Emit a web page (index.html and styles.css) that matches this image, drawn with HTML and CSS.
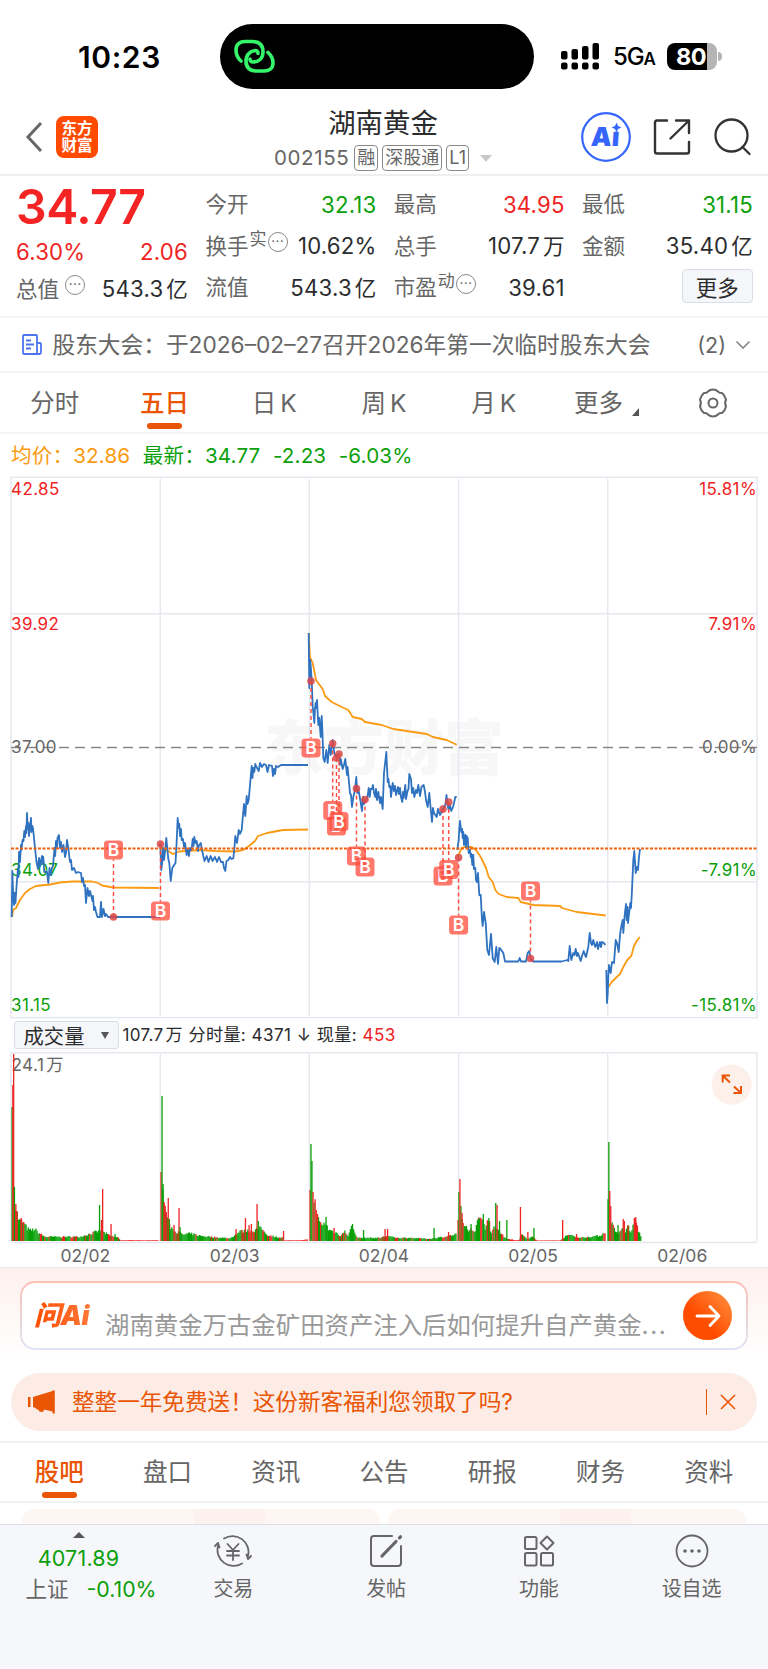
FILE: index.html
```html
<!DOCTYPE html>
<html lang="zh-CN">
<head>
  <meta charset="UTF-8" />
  <meta name="viewport" content="width=device-width, initial-scale=1" />
  <title>湖南黄金 002155</title>
  <link rel="stylesheet" href="styles.css">
</head>
<body>

  <!-- Phone status bar -->
  <div class="status-bar">
    <div class="clock">10:23</div>
    <div class="island">
      <svg width="42" height="48" viewBox="0 0 42 48" fill="none" stroke="#35f56a" stroke-width="3.6" stroke-linecap="round">
        <path d="M7 29C3.500 26 2 22 2 18C2 12 6 9.500 11 9.500H18C25 9.500 29 13 29 20C29 26 25 30 19 30C17 30 16 29 16 27"/>
        <path d="M34 20.500C37.500 23.500 39 27.500 39 31C39 36.500 35 39 30 39H23C16 39 12 35.500 12 29C12 23 16 19 21 18.500C23 18.500 24 19.500 24 21.500"/>
      </svg>
    </div>
    <div class="status-right">
      <svg width="39" height="27" viewBox="0 0 39 27">
        <rect x="0" y="8" width="6.500" height="8.500" rx="2"/><rect x="10.500" y="6" width="6.500" height="10.500" rx="2"/>
        <rect x="21" y="3" width="6.500" height="13.500" rx="2"/><rect x="31.500" y="0" width="6.500" height="16.500" rx="2"/>
        <rect x="0" y="19.500" width="6.500" height="7" rx="2"/><rect x="10.500" y="19.500" width="6.500" height="7" rx="2"/>
        <rect x="21" y="19.500" width="6.500" height="7" rx="2"/><rect x="31.500" y="19.500" width="6.500" height="7" rx="2"/>
      </svg>
      <span class="network">5G<small>A</small></span>
      <span class="battery">80</span>
    </div>
  </div>

  <!-- Header -->
  <header class="header">
    <div class="header-left">
      <svg width="18" height="32" viewBox="0 0 18 32" fill="none" stroke="#666" stroke-width="3"><path d="M16 2L3 16L16 30"/></svg>
      <div class="app-logo">东方<br>财富</div>
    </div>
    <div class="header-title">
      <h1>湖南黄金</h1>
      <div class="stock-code">
        <span class="code">002155</span>
        <span class="tag">融</span><span class="tag">深股通</span><span class="tag">L1</span>
        <i class="caret"></i>
      </div>
    </div>
    <div class="header-right">
      <svg width="50" height="50" viewBox="0 0 50 50">
        <circle cx="25" cy="25" r="23.800" fill="none" stroke="#3565fb" stroke-width="2.200"/>
        <text class="ai-text" x="10" y="34" transform="skewX(-4) translate(2 0)">Aı</text>
        <path d="M35.500 10.500L37 14L40.500 15.500L37 17L35.500 20.500L34 17L30.500 15.500L34 14Z" fill="#3565fb"/>
      </svg>
      <svg width="38" height="38" viewBox="0 0 38 38" fill="none" stroke="#333" stroke-width="2.400" stroke-linecap="round" stroke-linejoin="round">
        <path d="M14 2.500H4Q2 2.500 2 4.500V33.500Q2 35.500 4 35.500H34Q36 35.500 36 33.500V24M23 2.500H36V15M36 2.500L17.500 20.500"/>
      </svg>
      <svg width="38" height="38" viewBox="0 0 38 38" fill="none" stroke="#333" stroke-width="2.300" stroke-linecap="round">
        <circle cx="17.500" cy="17.500" r="16"/><path d="M28.500 29L35.500 36"/>
      </svg>
    </div>
  </header>

  <!-- Quote -->
  <section class="quote">
    <div class="quote-main">
      <div class="price">34.77</div>
      <div class="pair"><span class="red">6.30%</span><span class="red">2.06</span></div>
      <div class="pair total"><label>总值<i class="info">⋯</i></label><span>543.3<em>亿</em></span></div>
    </div>
    <div class="quote-grid">
      <div class="pair"><label>今开</label><span class="green">32.13</span></div>
      <div class="pair"><label>最高</label><span class="red">34.95</span></div>
      <div class="pair"><label>最低</label><span class="green">31.15</span></div>
      <div class="pair"><label>换手<sup>实</sup><i class="info">⋯</i></label><span>10.62%</span></div>
      <div class="pair"><label>总手</label><span>107.7<em>万</em></span></div>
      <div class="pair"><label>金额</label><span>35.40<em>亿</em></span></div>
      <div class="pair"><label>流值</label><span>543.3<em>亿</em></span></div>
      <div class="pair"><label>市盈<sup>动</sup><i class="info">⋯</i></label><span>39.61</span></div>
      <div class="pair end"><button class="btn-more">更多</button></div>
    </div>
  </section>

  <!-- Notice -->
  <section class="notice">
    <svg width="20" height="22" viewBox="0 0 20 22" fill="none" stroke="#4d74ee" stroke-width="1.800">
      <path d="M1 2Q1 1 2 1H14Q15 1 15 2V20H2Q1 20 1 19ZM15 9H18Q19 9 19 10V18.500Q19 20 17.500 20H14M4 6.500H9M4 10.500H12M4 14.500H9"/>
    </svg>
    <p>股东大会：于2026–02–27召开2026年第一次临时股东大会</p>
    <span class="count">(2)</span>
    <svg width="16" height="10" viewBox="0 0 16 10" fill="none" stroke="#888" stroke-width="1.600"><path d="M1.500 1.500L8 8L14.500 1.500"/></svg>
  </section>

  <!-- Period tabs -->
  <nav class="tabs period-tabs">
    <a>分时</a>
    <a class="active">五日</a>
    <a>日<em>K</em></a>
    <a>周<em>K</em></a>
    <a>月<em>K</em></a>
    <a class="more">更多<i class="corner"></i></a>
    <a>
      <svg width="30" height="30" viewBox="0 0 30 30" fill="none" stroke="#666" stroke-width="2" stroke-linejoin="round">
        <path d="M10 3.500Q12 1.500 15 1.500Q18 1.500 20 3.500Q21 5.300 24 5Q27 7.500 28 11.500Q26.300 15 28 18.500Q27 22.500 24 25Q21 24.700 20 26.500Q18 28.500 15 28.500Q12 28.500 10 26.500Q9 24.700 6 25Q3 22.500 2 18.500Q3.700 15 2 11.500Q3 7.500 6 5Q9 5.300 10 3.500Z"/>
        <circle cx="15" cy="15" r="4.500"/>
      </svg>
    </a>
  </nav>

  <!-- Five day chart -->
  <section class="chart">
    <div class="legend">
      <span class="orange">均价：32.86</span>
      <span class="green">最新：34.77</span>
      <span class="green">-2.23</span>
      <span class="green">-6.03%</span>
    </div>

    <svg class="price-chart" width="768" height="543" viewBox="0 476 768 543">
      <text class="watermark" x="264" y="770">东方财富</text>
      <g class="grid">
        <path d="M160.300 479V1016M309.300 479V1016M458.600 479V1016M607.700 479V1016M11 613.700H757M11 881.700H757"/>
        <rect x="11" y="477.300" width="746" height="540.300"/>
      </g>
      <path class="base-line" d="M11 747.500H757"/>
      <g class="axis">
        <text class="up" x="11" y="495.400">42.85</text>
        <text class="up" x="11" y="629.800">39.92</text>
        <text x="11" y="753">37.00</text>
        <text class="down" x="11" y="876.300">34.07</text>
        <text class="down" x="11" y="1011.300">31.15</text>
        <text class="up end" x="757" y="495.400">15.81%</text>
        <text class="up end" x="757" y="629.800">7.91%</text>
        <text class="end" x="757" y="753">0.00%</text>
        <text class="down end" x="757" y="876.300">-7.91%</text>
        <text class="down end" x="757" y="1011.300">-15.81%</text>
      </g>

      <g class="avg">
        <polyline points="12,917 13,910 16,908 20,900 25,893 30,889 36,886 50,884.5 60,882.5 72,881.5 92,881.5 98,883 102,885.5 113,887.5 159,888"/>
        <polyline points="160,846 165,850 168,851 173,854 179,851.5 200,850 215,851 235,851.5 243,850 249,846 255,841 258,836 267,833 283,830 308,829.5"/>
        <polyline points="308.7,633 310,657 312.7,663 316,680 322.7,689 325,696 331.7,702 341.7,707 348.3,710 352.7,717 361.7,719 365,722 381.7,725 393.3,729 426.7,734 433,737 446.7,740 456.7,744.7"/>
        <polyline points="457.3,858 461.7,848 465,847 471.7,847 476,850 480.7,857 486,868 488.7,877 492.7,882 495.3,890 498.7,894 506.7,897 518.3,898 520.7,902 533.3,905 560,906 562,908 576.7,912 605.7,915.5"/>
        <polyline points="608.3,987 611.7,982 616.7,977 620,974 623.3,967 627.3,960 631.3,956 634,946 636.7,941 639.7,937"/>
      </g>
      <g class="line">
        <polyline points="11.7,917 12.3,871 13,890 14,905 14.600,893 15.5,903 16.300,890 17,880 18,868 18.500,877 19,852 20,862 21,845 21.500,850 22.5,840 23.5,841 24.300,831 25,837 26,826 26.400,833 27,813 27.7,829 28.400,823 29,836 30,827 31,818 31.500,832 32.300,826 33,828 34,838 35,848 36.5,862 38,869 39,858 40,866 42,856 42.7,864 43.300,857 44.300,872 45.5,872 47,872 48.3,883 49.500,868 50.500,875 52,868 53,866 54.5,848 55.200,856 56,841 57,848 57.500,838 59,835 60,848 61,842 62,852 63.5,845 65,857 66,853 67,840 68.5,850 70,862 71,860 72,870 74,868 76,873 78,872 81,873 82,882 83,878 84,886 85,885 86,903 87.5,888 89,896 90,891 92.5,901 93,896 94,910 95,907 96,912 97.5,917 100,917 101,902 102,917 103.5,909 105,916 106,914 108,917 160,917"/>
        <polyline points="160.3,843 161.3,870 162.300,862 163,848 164,860 165,852 166.3,838 168.3,859 169.300,863 170.7,881 172.3,868 173.500,866 175.5,863 176.500,845 177.7,818 178.700,828 179.300,824 180,836 181,829 181.7,840 183,839 184,847 185,843 186.7,855 188,849 189,856 190,848 191.500,850 192.7,839 193.500,846 194.3,837 195.500,843 196.7,841 198,851 199,845 200.7,843 202,850 203.3,856 204.500,861 206.7,856 208.500,862 210.7,856 212.500,861 215,857 217,862 219,857 221,862 223,862 224,868 225.3,871 226.500,861 228.3,860 230,857 231.500,859 233.3,858.5 234.300,849 235.3,836 237,843 238.7,830 240,834 241.7,830 243,815 244,804 245.3,816 246.7,796 247.500,804 248.7,800 250,785 251.7,766 252.500,778 253.3,768 254.300,772 255.3,764 257,768 258.7,771 260,763 262,767 264,764 266,765 267.500,772 269,765 272,766 273,776 274,769 275,774 276,766 278,767 281,765 308,765"/>
        <polyline points="308.7,633 309.3,688 310.3,660 311.7,680 312.7,707 313.500,714 314.3,723 315,708 315.7,703 316.300,708 317,700 318.3,725 319.300,718 320.7,737 321.7,716 322.300,728 323.3,758 324.7,762 326.3,750 327.7,763 329.3,745 330.7,755 332.7,740 334.3,753 336.7,757 339,754 340,765 340.700,759 342.7,769 344,765 345.3,759 347,775 347.600,767 350,793 351,795 352,807 353.3,797 355,790 356.3,777 357.300,793 358.3,789 360.3,800 362,811 363,797 364,804 366,800 367.3,798 368.7,788 369.700,797 370.7,789 372,789 373,785 374,793 375.3,797 376,789 377,800 378.3,792 380,803 381,797 382.7,809 384,773 385,764 386.3,752 387.7,782 388.500,779 389.3,787 390.300,786 391,797 392.7,783 394,791 395,786 396,795 398,787 399,794 400,788 401,797 402.3,802 403,792 403.700,798 405.300,785 406,799 407.500,791 408.500,789 409.3,774 411,779 412,793 413.3,788 414.300,797 416,790 417,793 418.3,785 420,796 421.500,787 423.7,785 425,792 426,800 427.7,807 429.3,793 431,812 432,822 433,808 434,813 436.7,817 438,809 440,815 441.500,812 443,809 445.3,805 446.500,795 448,807 448.7,810 450,805 451.3,811 453,807 454,803 455.3,797 456.7,797"/>
        <polyline points="457.3,850 458.7,840 459.300,829 460,821 461.3,832 462,829 462.7,838 463.300,832 464,845 465.3,835 466,847 466.500,836 467.7,838 468.7,853 470,850 470.7,857 471.300,854 472.3,865 472.700,855 473.3,855 474,869 475.3,868 476,880 477,882 478,873 479.3,895 480.7,895 482,920 482.7,926 484,912 485.7,923 487.3,950 489,955 491,934 492.7,958 494.7,962 496.3,947 498,964 499.3,948 501.3,950 503.3,953 505,961.5 518.3,961.5 519.7,958 521,961.5 526,961.5 527.7,953 529.3,951 530.7,959 533.3,961.5 561.7,961.500 567.3,960 568.3,961 569.7,946 571.3,960 573.3,953 574.500,955 575.7,949 577,956 578,953 580.7,961 582,956 583.7,951 585,955 586,957 588.3,947 589.7,933 591,943 592,945 593.3,940 594.500,945 595.3,947 597,942 598,949 600,942 601,947 602,942 604,943 605.3,945"/>
        <polyline points="606.3,970 607,1003 607.700,994 608.3,977 609,965 610.7,973 612,962 614,963 615.7,940 617,943 618.7,952 620,935 621,928 622.7,920 623.3,933 624.7,915 626,904 626.700,920 627.500,907 628,923 630.3,903 631,908 632,890 633.3,860 634.3,851 635.7,873 637,867 638,870 639,857 640,849"/>
      </g>

      <path class="last-line" d="M11 848.500H757"/>
      <g id="markers"></g>
    </svg>

    <div class="volume-head">
      <button class="indicator">成交量<i></i></button>
      <span>107.7<em>万</em></span><span>分时量:</span><span>4371</span><span class="arrow">↓</span><span>现量:</span><span class="red">453</span>
    </div>

    <svg class="volume-chart" width="768" height="216" viewBox="0 1052 768 216">
      <g class="grid">
        <path d="M160.300 1054V1241M309.300 1054V1241M458.600 1054V1241M607.700 1054V1241"/>
        <path d="M11 1241V1052.800H757V1241" /><path d="M11 1242.500H757"/>
      </g>
      <text class="vol-label" x="11.500" y="1071">24.1<tspan dx="2">万</tspan></text>
      <g id="bars"></g>
      <g class="dates">
        <text x="85.300" y="1262">02/02</text>
        <text x="234.700" y="1262">02/03</text>
        <text x="384" y="1262">02/04</text>
        <text x="533" y="1262">02/05</text>
        <text x="682.300" y="1262">02/06</text>
      </g>
      <circle cx="731.700" cy="1084.500" r="20" fill="#fdf0ea"/>
      <path class="expand" d="M722.700 1082.500V1075.500H730M722.700 1075.500L730 1082.500M741 1086V1093H733.500M741 1093L734 1086.500"/>
      <path d="M0 1267.500H768" stroke="#eae6e6"/>
    </svg>
  </section>

  <!-- Ask AI -->
  <section class="ask">
    <div class="ask-box">
      <span class="ask-logo">问Ai</span>
      <p>湖南黄金万古金矿田资产注入后如何提升自产黄金<em>...</em></p>
      <div class="go">
        <svg width="28" height="26" viewBox="0 0 28 26" fill="none" stroke="#fff" stroke-width="2.800" stroke-linecap="round" stroke-linejoin="round"><path d="M3 13H25M16 3.500L25 13L16 22.500"/></svg>
      </div>
    </div>
  </section>

  <!-- Promo -->
  <section class="promo">
    <svg width="28" height="24" viewBox="0 0 28 24" fill="#ea5504"><path d="M0 7H2.500V17H0ZM5 7L24.500 1V0.500H26.800V23.500H24.500V21.500L16 19.500Q16 22 13.500 22Q11 22 10.500 20L8.500 19Q8 18 5 17Z"/></svg>
    <p>整整一年免费送！这份新客福利您领取了吗?</p>
    <i class="divider"></i>
    <svg width="16" height="16" viewBox="0 0 16 16" stroke="#ea5504" stroke-width="1.600"><path d="M1 1L15 15M15 1L1 15"/></svg>
  </section>

  <!-- Detail tabs -->
  <nav class="tabs detail-tabs">
    <a class="active">股吧</a>
    <a>盘口</a>
    <a>资讯</a>
    <a>公告</a>
    <a>研报</a>
    <a>财务</a>
    <a>资料</a>
  </nav>
  <div class="cards"><div class="card"></div><div class="card"></div></div>

  <!-- Bottom bar -->
  <footer class="bottom-bar">
    <div class="index">
      <i class="up-caret"></i>
      <strong>4071.89</strong>
      <div><span>上证</span><span class="green">-0.10%</span></div>
    </div>
    <div class="action">
      <svg width="38" height="34" viewBox="0 0 38 34" fill="none" stroke="#666" stroke-width="1.800" stroke-linecap="round">
        <path d="M10 4.500A16 16 0 0 1 34 22M34 25L37 22M34 25L32.500 20.500M28 29.500A16 16 0 0 1 4 12M4 9L1 12M4 9L5.500 13.500"/>
        <path d="M13.500 10L19 16L24.500 10M19 16V26M13 17H25M13 21.500H25"/>
      </svg>
      <span>交易</span>
    </div>
    <div class="action">
      <svg width="34" height="34" viewBox="0 0 34 34" fill="none" stroke="#666" stroke-width="2" stroke-linecap="round">
        <path d="M23 2H5Q2 2 2 5V29Q2 32 5 32H29Q32 32 32 29V12"/>
        <path d="M13 22L27 7.500M30.500 3.800L31.500 2.800" stroke-width="3.200"/>
      </svg>
      <span>发帖</span>
    </div>
    <div class="action">
      <svg width="32" height="34" viewBox="0 0 32 34" fill="none" stroke="#666" stroke-width="2">
        <rect x="2" y="3" width="11.500" height="12" rx="1.500"/><path d="M24 2.500L30.500 9L24 15.500L17.500 9Z" stroke-linejoin="round"/>
        <rect x="2" y="19" width="11.500" height="12.500" rx="1.500"/><rect x="18" y="19" width="12" height="12.500" rx="1.500"/>
      </svg>
      <span>功能</span>
    </div>
    <div class="action">
      <svg width="34" height="34" viewBox="0 0 34 34" fill="none" stroke="#666" stroke-width="1.800">
        <circle cx="17" cy="17" r="15.500"/>
        <g fill="#666" stroke="none"><circle cx="10" cy="17" r="1.800"/><circle cx="17" cy="17" r="1.800"/><circle cx="24" cy="17" r="1.800"/></g>
      </svg>
      <span>设自选</span>
    </div>
  </footer>

  <script src="script.js"></script>
</body>
</html>
```

FILE: styles.css
```css
/* Reset & basics */
* {
  box-sizing: border-box;
}
body {
  width: 768px;
  margin: 0;
  background: #fff;
  color: #2b2c2e;
  font-family: Inter, "Noto Sans CJK SC", sans-serif;
  font-size: 21.5px;
  line-height: 1;
}
h1, p {
  margin: 0;
  font-weight: 400;
}
i, em {
  font-style: normal;
}
svg {
  display: block;
  flex: none;
}
button {
  font-family: inherit;
  color: inherit;
  padding: 0;
}
.red { color: #f02323; }
.green { color: #0ba00b; }
.orange { color: #fb9a13; }

/* Status bar */
.status-bar {
  height: 96px;
  padding-top: 24px;
  display: flex;
}
.clock {
  width: 220px;
  padding-left: 78px;
  font-size: 30px;
  font-weight: 600;
  line-height: 67px;
  letter-spacing: 0.6px;
  color: #000;
}
.island {
  width: 314px;
  height: 65px;
  padding: 8px 0 0 14px;
  border-radius: 33px;
  background: #000;
}
.status-right {
  height: 65px;
  padding-left: 27px;
  display: flex;
  align-items: center;
  color: #000;
}
.network {
  width: 54px;
  margin-left: 13px;
  font-size: 24px;
  font-weight: 500;
  letter-spacing: -1.2px;
}
.network small {
  font-size: 17px;
  font-weight: 600;
}
.battery {
  position: relative;
  width: 50px;
  height: 27px;
  padding-right: 2px;
  border-radius: 8px;
  background: linear-gradient(to right, #000 80%, #b5b5b5 80%);
  color: #fff;
  font-size: 23.5px;
  font-weight: 700;
  line-height: 27px;
  letter-spacing: -0.5px;
  text-align: center;
}
.battery::after {
  content: "";
  position: absolute;
  left: 51px;
  top: 9px;
  width: 4px;
  height: 9px;
  border-radius: 0 4px 4px 0;
  background: #b5b5b5;
}

/* Header */
.header {
  height: 80px;
  padding: 8px 16px 0 25px;
  border-bottom: 2px solid #eeeff0;
  display: flex;
  justify-content: space-between;
}
.header-left {
  width: 160px;
  height: 66px;
  display: flex;
  align-items: center;
  gap: 13px;
}
.app-logo {
  width: 42px;
  height: 42px;
  padding-top: 4px;
  border-radius: 8px;
  background: #ff4a00;
  color: #fff;
  font-size: 15.5px;
  font-weight: 700;
  line-height: 17px;
  text-align: center;
}
.header-title {
  display: flex;
  flex-direction: column;
  align-items: center;
}
.header-title h1 {
  padding-top: 1px;
  font-size: 27.4px;
  line-height: 36px;
}
.stock-code {
  margin-top: 1px;
  height: 37px;
  display: flex;
  align-items: center;
  gap: 4px;
  color: #666;
  font-size: 20.5px;
}
.code {
  margin-right: 1px;
  letter-spacing: 0.6px;
}
.tag {
  height: 26px;
  padding: 0 2px;
  border: 1.5px solid #888;
  border-radius: 4px;
  font-size: 18px;
  line-height: 23px;
}
.caret {
  margin-left: 7px;
  border: 6px solid transparent;
  border-top: 7px solid #c8c8c8;
  border-bottom: 0;
}
.header-right {
  width: 171px;
  height: 66px;
  display: flex;
  align-items: center;
  justify-content: space-between;
}
.ai-text {
  fill: #3565fb;
  font-size: 26px;
  font-weight: 900;
}

/* Quote */
.quote {
  height: 141.5px;
  padding: 8px 15px 0 16px;
  border-bottom: 2px solid #f4f5f6;
  display: grid;
  grid-template-columns: 172px 547px;
  gap: 17.5px;
}
.quote-grid {
  display: grid;
  grid-template-columns: repeat(3, 171px);
  grid-auto-rows: 41.7px;
  gap: 0 17.2px;
}
.pair {
  display: flex;
  justify-content: space-between;
  align-items: center;
  white-space: nowrap;
}
.pair span {
  font-size: 22.2px;
  letter-spacing: 0.2px;
}
.pair label {
  display: flex;
  align-items: center;
  color: #666;
}
.pair em {
  margin-left: 3px;
  font-size: 21.5px;
}
.pair sup {
  font-size: 17px;
  line-height: 17px;
  margin: -14px 0 0 1px;
}
.pair.end {
  justify-content: flex-end;
}
.info {
  width: 20px;
  height: 20px;
  margin: -9px 0 0 1px;
  border: 1.5px solid #888;
  border-radius: 50%;
  font-size: 13px;
  line-height: 17px;
  text-align: center;
}
.price {
  height: 50px;
  font-size: 48.2px;
  font-weight: 600;
  line-height: 46px;
  letter-spacing: -0.5px;
  color: #f52424;
}
.quote-main .pair {
  height: 37px;
}
.quote-main .total {
  height: 36.5px;
}
.total .info {
  margin-left: 6px;
}
.btn-more {
  width: 71px;
  height: 34px;
  margin-top: -4px;
  border: 1px solid #d8dde6;
  border-radius: 4px;
  background: #f5f6f9;
  font-size: 21.5px;
}

/* Notice */
.notice {
  height: 55.5px;
  padding: 2px 17px 0 21.5px;
  border-bottom: 2px solid #f4f5f6;
  display: flex;
  align-items: center;
  color: #666;
  font-size: 22.7px;
}
.notice p {
  flex: 1;
  margin-left: 11px;
  white-space: nowrap;
}
.count {
  margin-right: 9px;
  font-size: 21.5px;
}

/* Tabs */
.tabs {
  display: grid;
  grid-template-columns: repeat(7, 1fr);
  color: #666;
  font-size: 24.5px;
}
.tabs a {
  position: relative;
  display: flex;
  align-items: center;
  justify-content: center;
}
.tabs em {
  margin-left: 4px;
}
.tabs .active {
  color: #ea5504;
  font-weight: 500;
}
.tabs .active::after {
  content: "";
  position: absolute;
  left: calc(50% - 17.5px);
  bottom: 3px;
  width: 35px;
  height: 6px;
  border-radius: 3px;
  background: #ea5504;
}
.period-tabs {
  height: 61px;
  border-bottom: 2px solid #f4f5f6;
}
.period-tabs a {
  padding-top: 1px;
}
.period-tabs .more {
  padding-left: 6px;
}
.corner {
  margin: 18px 0 0 9px;
  border-left: 7px solid transparent;
  border-bottom: 8px solid #555;
}

/* Chart */
.legend {
  height: 42px;
  padding: 2px 0 0 11px;
  display: flex;
  align-items: center;
  gap: 12.5px;
  font-size: 20.6px;
  letter-spacing: 0.15px;
}
.grid {
  fill: none;
  stroke: #e5e8ef;
  stroke-width: 1.5;
}
.watermark {
  font-size: 60px;
  font-weight: 900;
  fill: #f7f7f8;
}
.base-line {
  stroke: #888;
  stroke-width: 1.5;
  stroke-dasharray: 10 6;
}
.last-line {
  stroke: #f0600f;
  stroke-width: 1.8;
  stroke-dasharray: 3 1.5;
}
.axis text {
  font-size: 17px;
  letter-spacing: 0.4px;
  fill: #666;
}
.axis .up { fill: #f02323; }
.axis .down { fill: #0ba00b; }
.axis .end { text-anchor: end; }
.avg, .line {
  fill: none;
  stroke-width: 1.8;
  stroke-linejoin: round;
}
.avg { stroke: #fb9a13; }
.line { stroke: #2f72c0; }
.marker line {
  stroke: #fd5043;
  stroke-width: 1.5;
  stroke-dasharray: 4 3;
}
.marker circle {
  fill: #d94848;
  fill-opacity: 0.85;
}
.marker rect {
  fill: #ff4b3a;
  fill-opacity: 0.75;
}
.marker text {
  fill: #fff;
  font-size: 17.5px;
  font-weight: 600;
  text-anchor: middle;
}
.volume-head {
  height: 33px;
  padding: 0 0 1px 14px;
  display: flex;
  align-items: center;
  font-size: 17.1px;
  letter-spacing: 0.35px;
  gap: 5.5px;
}
.volume-head em {
  margin-left: 2px;
}
.indicator {
  width: 105px;
  height: 28px;
  margin-right: -2px;
  border: 1px solid #d8dde6;
  border-radius: 3px;
  background: #f5f6f9;
  display: flex;
  align-items: center;
  justify-content: center;
  gap: 17px;
  font-size: 20.3px;
}
.indicator i {
  border: 4.5px solid transparent;
  border-top: 7px solid #555;
  border-bottom: 0;
}
.vol-label {
  font-size: 17.2px;
  letter-spacing: 0.4px;
  fill: #666;
}
.dates text {
  font-size: 17.5px;
  fill: #666;
  text-anchor: middle;
}
.expand {
  fill: none;
  stroke: #ea5504;
  stroke-width: 2;
}

/* Ask AI */
.ask {
  height: 105px;
  padding: 13px 20px 0;
  background: linear-gradient(#fef1ed, #fff 90%);
}
.ask-box {
  height: 69px;
  padding: 0 14px 0 12px;
  border: 2px solid transparent;
  border-radius: 15px;
  background: linear-gradient(#fff, #fff) padding-box, linear-gradient(#fbc0b5, #dde4f5) border-box;
  display: flex;
  align-items: center;
}
.ask-logo {
  width: 71px;
  padding-bottom: 1px;
  font-size: 27px;
  font-weight: 900;
  font-style: italic;
  letter-spacing: -0.5px;
  background: linear-gradient(to right, #ff4d00, #ff7a3c 60px);
  background-clip: text;
  color: transparent;
}
.ask-box p {
  flex: 1;
  padding-top: 19px;
  color: #999;
  font-size: 24.4px;
  white-space: nowrap;
}
.ask-box em {
  letter-spacing: 1.5px;
}
.go {
  width: 49px;
  height: 49px;
  border-radius: 50%;
  background: linear-gradient(45deg, #ff4d00 40%, #ff9544);
  display: flex;
  align-items: center;
  justify-content: center;
}

/* Promo */
.promo {
  height: 58px;
  margin: 0 11px 10px;
  padding: 0 21px 0 17px;
  border-radius: 29px;
  background: #fcece5;
  display: flex;
  align-items: center;
  color: #ea5504;
  font-size: 22.6px;
}
.promo p {
  flex: 1;
  margin-left: 16px;
}
.divider {
  width: 1.5px;
  height: 26px;
  margin-right: 13px;
  background: #ea5504;
}

/* Detail */
.detail-tabs {
  height: 62px;
  padding: 0 5px;
  border-top: 2px solid #f0f1f2;
  border-bottom: 2px solid #f0f1f2;
}
.cards {
  height: 21px;
  padding: 6px 22px 0;
  overflow: hidden;
  display: grid;
  grid-template-columns: 1fr 1fr;
  gap: 8px;
}
.card {
  height: 40px;
  border-radius: 12px;
  background: linear-gradient(to right, #fef6f3 48%, #fdf1ee 48%, #fdf1ee 68%, #fef6f3 68%);
}

/* Bottom bar */
.bottom-bar {
  height: 145px;
  border-top: 1px solid #dcdfe5;
  background: #f6f7fa;
  display: grid;
  grid-template-columns: 157px repeat(4, 1fr);
  color: #666;
  font-size: 20px;
}
.index {
  display: flex;
  flex-direction: column;
  align-items: center;
  font-size: 21.5px;
}
.up-caret {
  margin-top: 7px;
  border: 6px solid transparent;
  border-top: 0;
  border-bottom: 6px solid #555;
}
.index strong {
  margin-top: 9px;
  line-height: 22px;
  font-weight: 400;
  letter-spacing: 0.2px;
  color: #0ba00b;
}
.index div {
  width: 131px;
  margin: 9px 0 0 25px;
  line-height: 22px;
  display: flex;
  justify-content: space-between;
}
.index .green {
  font-size: 21.3px;
}
.action {
  padding-top: 9px;
  display: flex;
  flex-direction: column;
  align-items: center;
  gap: 11px;
}
.action span {
  line-height: 20px;
}
```

FILE: script.js
```javascript
const NS = 'http://www.w3.org/2000/svg';

function add(parent, tag, attrs, text) {
  const el = document.createElementNS(NS, tag);
  for (const key in attrs) el.setAttribute(key, attrs[key]);
  if (text) el.textContent = text;
  parent.appendChild(el);
  return el;
}

// Buy markers: [x, y of the price dot, y of the badge]
const markers = [
  [113.5, 917, 850], [160.5, 844, 911], [311, 681, 748],
  [332.7, 743.5, 810.5], [336.5, 758, 826], [339, 754, 821.5],
  [356.5, 788.5, 856], [365, 799.5, 867], [443, 809, 876],
  [448.7, 802, 869.5], [458.6, 857.5, 925], [530.5, 958.5, 891]
];

markers.forEach(([x, dot, badge]) => {
  const g = add(document.getElementById('markers'), 'g', { class: 'marker' });
  const end = badge > dot ? badge - 9.5 : badge + 9.5;
  add(g, 'line', { x1: x, y1: dot, x2: x, y2: end });
  add(g, 'circle', { cx: x, cy: dot, r: 3.8 });
  add(g, 'rect', { x: x - 9.5, y: badge - 9.5, width: 19, height: 19, rx: 3.5 });
  add(g, 'text', { x: x, y: badge + 6.3 }, 'B');
});

// Volume level through each day: [x, height]
const levels = [
  [[15, 37], [17, 26], [19, 19], [23, 18], [27, 12], [30, 10], [35, 11], [38, 8], [45, 4], [80, 4], [94, 8], [98, 9], [104, 8], [110, 5], [119, 3], [120, 0.7], [159, 0.7]],
  [[163, 45], [165, 30], [167, 20], [171, 13], [176, 9], [183, 6], [190, 7], [200, 5], [210, 4], [230, 2.5], [240, 9], [254, 10], [260, 12], [267, 6], [275, 4], [283, 3], [284, 0.6], [300, 0.6], [308, 1.5]],
  [[314, 37], [316, 34], [319, 17], [322, 15], [326, 17], [328, 11], [336, 8], [340, 5], [345, 9], [348, 5], [352, 14], [355, 7], [358, 3], [380, 3], [387, 5], [395, 3], [411, 3], [430, 2], [436, 3], [445, 4], [455, 6], [457, 9]],
  [[462, 18], [464, 12], [467, 14], [469, 8], [471, 12], [474, 8], [478, 19], [483, 22], [485, 13], [489, 21], [491, 8], [494, 12], [498, 12], [501, 7], [505, 3], [509, 2], [515, 0.8], [519, 0.8], [522, 7], [525, 4], [527, 1.5], [530, 3], [533, 4], [536, 1], [538, 0.5], [560, 0.5], [565, 4], [570, 6], [580, 3], [590, 4], [600, 5], [606, 9]],
  [[611, 19], [613, 14], [617, 8], [620, 8], [622, 12], [626, 9], [628, 14], [631, 7], [634, 18], [636, 20], [638, 10], [641, 5]]
];

// Single tall bars: [x, height, colour]
const spikes = [
  [12, 134, 'g'], [12.8, 156, 'r'], [13.6, 187, 'r'], [14.4, 54, 'g'], [15.8, 37, 'r'], [17, 30, 'r'], [21, 23, 'r'], [23.3, 19, 'r'],
  [99.5, 36, 'g'], [101.4, 21, 'r'], [102.6, 52, 'r'], [111, 17, 'r'], [115, 7, 'g'],
  [161, 69, 'r'], [162, 145, 'g'], [163, 57, 'g'], [164, 39, 'r'], [165.2, 35, 'r'], [168.2, 43, 'r'], [169.3, 22, 'g'], [174, 16, 'r'], [179, 33, 'r'], [180, 14, 'g'],
  [236, 12, 'r'], [242, 11, 'r'], [245.4, 23, 'r'], [249, 16, 'r'], [251.3, 17, 'r'], [257, 37, 'r'], [258.2, 20, 'g'], [263, 11, 'r'], [283.5, 10, 'r'],
  [310, 51, 'r'], [310.9, 97, 'g'], [311.9, 80, 'g'], [313, 49, 'r'], [317.4, 27, 'r'], [326, 24, 'g'], [334, 13, 'r'], [352.5, 17, 'g'], [363.5, 11, 'g'],
  [385, 12, 'r'], [387.5, 12, 'r'], [434, 13, 'g'], [448.5, 9, 'r'],
  [458, 21, 'r'], [458.9, 49, 'g'], [460.9, 35, 'g'], [459.9, 62, 'r'], [462, 28, 'r'], [471, 17, 'g'], [478.3, 22, 'g'], [483.3, 27, 'g'], [488.8, 23, 'g'],
  [495.7, 38, 'g'], [497, 36, 'r'], [499.5, 20, 'g'], [506.8, 21, 'g'], [520.4, 34, 'r'], [527.8, 9, 'r'], [533.9, 13, 'g'], [562.6, 21, 'r'], [576.5, 7, 'r'],
  [608, 42, 'g'], [608.8, 99, 'g'], [609.7, 50, 'r'], [610.7, 35, 'r'], [618, 16, 'g'], [623.2, 22, 'r'], [624.3, 20, 'r'], [628, 16, 'r'], [634.3, 23, 'r'], [635.7, 24, 'r']
];

const bars = document.getElementById('bars');
const BASE = 1241;
const COLORS = { r: '#f02323', g: '#07a007' };

function bar(x, h, color) {
  add(bars, 'rect', { x: x - 0.6, y: BASE - h, width: 1.3, height: h, fill: COLORS[color] });
}

let seed = 7;
function noise() {
  seed = (seed * 16807) % 2147483647;
  return seed / 2147483647;
}

levels.forEach(points => {
  let i = 0;
  for (let x = points[0][0]; x < points[points.length - 1][0]; x += 1.1) {
    while (x > points[i + 1][0]) i++;
    const [x0, h0] = points[i];
    const [x1, h1] = points[i + 1];
    const h = h0 + (h1 - h0) * (x - x0) / (x1 - x0);
    bar(x, Math.max(0.5, h * (0.85 + noise() * 0.4)), h < 1.6 || noise() < 0.25 ? 'r' : 'g');
  }
});
spikes.forEach(s => bar(...s));
```
